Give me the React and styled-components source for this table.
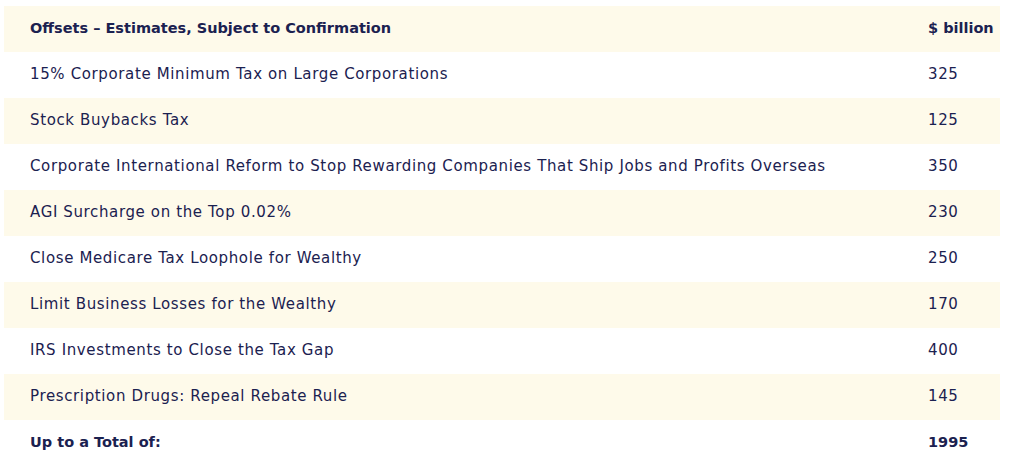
import React from 'react';
import styled, { createGlobalStyle } from 'styled-components';

// --> Global styles <--
const GlobalStyle = createGlobalStyle`
    body {
        margin: 0;
        background: #ffffff;
        font-family: "DejaVu Sans", "Noto Sans", sans-serif;
        color: #1b2150;
    }
`;

// wrapper for the whole table
const TableWrapper = styled.div`
    padding: 6px 9px 0 4px;
`;

// one row of the table, striped by prop
const Row = styled.div`
    display: grid;
    grid-template-columns: 898px 1fr;
    height: 46px;
    align-items: center;
    padding-bottom: 2px;
    box-sizing: border-box;
    background: ${props => props.$shaded ? '#fefaea' : '#ffffff'};
    font-size: ${props => props.$bold ? '14.5px' : '15px'};
    font-weight: ${props => props.$bold ? 700 : 400};
    letter-spacing: ${props => props.$bold ? '0' : '0.63px'};
`;

// a cell of a row
const Cell = styled.div`
    padding-left: 26px;
    white-space: nowrap;
`;

const offsets = [
    ['15% Corporate Minimum Tax on Large Corporations', '325'],
    ['Stock Buybacks Tax', '125'],
    ['Corporate International Reform to Stop Rewarding Companies That Ship Jobs and Profits Overseas', '350'],
    ['AGI Surcharge on the Top 0.02%', '230'],
    ['Close Medicare Tax Loophole for Wealthy', '250'],
    ['Limit Business Losses for the Wealthy', '170'],
    ['IRS Investments to Close the Tax Gap', '400'],
    ['Prescription Drugs: Repeal Rebate Rule', '145'],
];

export default function App() {
    return (
        <>
            <GlobalStyle />
            <TableWrapper>
                <Row $shaded $bold>
                    <Cell>Offsets – Estimates, Subject to Confirmation</Cell>
                    <Cell>$ billion</Cell>
                </Row>
                {offsets.map(([label, value], i) => (
                    <Row key={label} $shaded={i % 2 === 1}>
                        <Cell>{label}</Cell>
                        <Cell>{value}</Cell>
                    </Row>
                ))}
                <Row $bold>
                    <Cell>Up to a Total of:</Cell>
                    <Cell>1995</Cell>
                </Row>
            </TableWrapper>
        </>
    );
}
